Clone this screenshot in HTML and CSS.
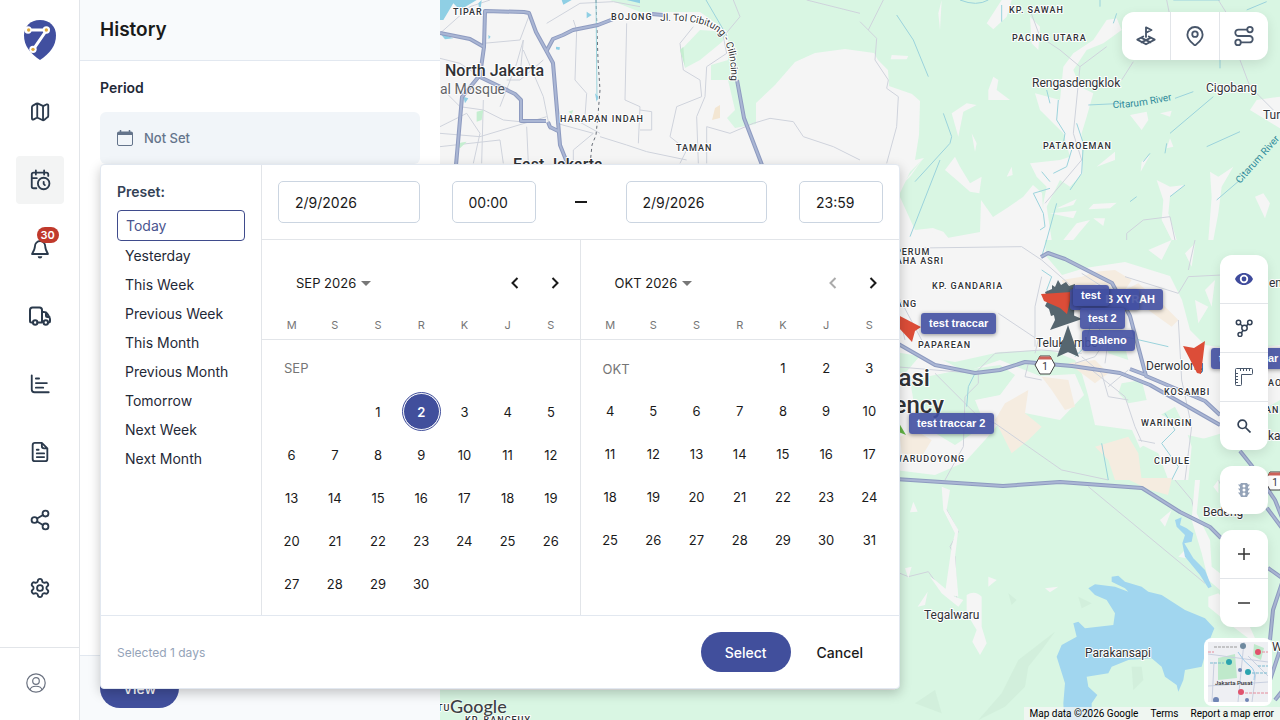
FILE: index.html
```html
<!DOCTYPE html>
<html lang="en">
<head>
<meta charset="utf-8">
<meta name="viewport" content="width=device-width, initial-scale=1">
<title>History</title>
<link rel="stylesheet" href="styles.css">
</head>
<body>
<div class="app">
  <nav class="rail" aria-label="Main">
    <a class="rail-logo" href="#" aria-label="Home">
      <svg width="32" height="40" viewBox="0 0 96 120">
        <path d="M48 0C18 0 0 20 0 46c0 32 18 54 48 74 30-20 48-42 48-74C96 20 78 0 48 0Z" fill="#414f9f"/>
        <path d="M8 30H68L28 88" fill="none" stroke="#fff" stroke-width="9"/>
        <g fill="#fff"><circle cx="12" cy="30" r="11"/><circle cx="67" cy="30" r="11"/><circle cx="27" cy="88" r="11"/></g>
        <g fill="#e0a93c"><circle cx="14" cy="30" r="5"/><circle cx="67" cy="30" r="5"/><circle cx="27" cy="88" r="5"/></g>
      </svg>
    </a>
    <a class="rail-item" href="#" aria-label="Map"><svg class="icon" viewBox="0 0 24 24"><path d="M3.2 6.6a2 2 0 0 1 1-1.6L8 2.9q1-.5 2 0l4.500 2.200q1 .5 2 0L19 3.800q2-.7 2 1.200v11.200a2 2 0 0 1-1.100 1.700L16.500 20.700q-1 .5-2 0L10 18.500q-1-.5-2 0L5.200 20q-2 .7-2-1.200ZM9 3v15M15.300 5.500V21"/></svg></a>
    <a class="rail-item active" href="#" aria-label="History"><svg class="icon" viewBox="0 0 24 24"><path d="M21 7.500V6a2 2 0 0 0-2-2H5a2 2 0 0 0-2 2v13a2 2 0 0 0 2 2h3M16.500 1.500V6M7.500 1.500V6M3 10h5.500M17.300 17.500 16 16.200V14"/><circle cx="16" cy="15.800" r="6.300"/></svg></a>
    <a class="rail-item" href="#" aria-label="Alerts"><svg class="icon" viewBox="0 0 24 24"><path d="M6.500 10a5.600 5.600 0 0 1 11.200 0c0 3 1 5 3 8.500H3.300c2-3.500 3.200-5.500 3.200-8.500Z"/><path class="solid" d="M9.500 21h5a2.500 2.500 0 0 1-5 0Z"/></svg><span class="badge">30</span></a>
    <a class="rail-item" href="#" aria-label="Vehicles"><svg class="icon truck" viewBox="0 0 24 24"><path d="M5 18.500H3.500a1.500 1.500 0 0 1-1.500-1.500V6a2.500 2.500 0 0 1 2.500-2.500h7A2.500 2.500 0 0 1 14 6v12.500H9.500M14 8h2q2.500 0 3.500 2l1.700 3q.8 1.300.8 2.500V17a1.500 1.500 0 0 1-1.500 1.500h-.500M18 8.500v3q0 1.500 1.500 1.500h2"/><circle cx="7.200" cy="18.500" r="2.200"/><circle cx="17.800" cy="18.500" r="2.200"/></svg></a>
    <a class="rail-item" href="#" aria-label="Statistics"><svg class="icon" viewBox="0 0 24 24"><path d="M3 2.500V18a3 3 0 0 0 3 3h15.500M7.500 6h3.500M7.500 11h12M7.500 16h8"/></svg></a>
    <a class="rail-item" href="#" aria-label="Reports"><svg class="icon" viewBox="0 0 24 24"><path d="M14 2H6.500A2.500 2.500 0 0 0 4 4.500v15A2.500 2.500 0 0 0 6.500 22h11a2.500 2.500 0 0 0 2.500-2.500V8ZM14 2v3.500A2.500 2.500 0 0 0 16.500 8H20M8.500 9.500h2M8.500 13.500h8M8.500 17.500h8"/></svg></a>
    <a class="rail-item" href="#" aria-label="Share"><svg class="icon" viewBox="0 0 24 24"><circle cx="18" cy="5" r="3.200"/><circle cx="6" cy="12" r="3.200"/><circle cx="18" cy="19" r="3.200"/><path d="m8.800 13.600 6.400 3.800M15.200 6.600 8.800 10.400"/></svg></a>
    <a class="rail-item" href="#" aria-label="Settings"><svg class="icon" viewBox="0 0 24 24"><path d="M9.671 4.136a2.340 2.340 0 0 1 4.659 0 2.340 2.340 0 0 0 3.319 1.915 2.340 2.340 0 0 1 2.330 4.033 2.340 2.340 0 0 0 0 3.831 2.340 2.340 0 0 1-2.330 4.033 2.340 2.340 0 0 0-3.319 1.915 2.340 2.340 0 0 1-4.659 0 2.340 2.340 0 0 0-3.320-1.915 2.340 2.340 0 0 1-2.330-4.033 2.340 2.340 0 0 0 0-3.831A2.340 2.340 0 0 1 6.350 6.051a2.340 2.340 0 0 0 3.319-1.915"/><circle cx="12" cy="12" r="3.200"/></svg></a>
    <div class="rail-user"><a href="#" aria-label="Account"><svg width="20" height="20" viewBox="0 0 20 20" fill="none" stroke="#6b7280" stroke-width="1.200"><circle cx="10" cy="10" r="9.200"/><circle cx="10" cy="8" r="3.300"/><path d="M4 17c1-5 11-5 12 0"/></svg></a></div>
  </nav>

  <section class="panel">
    <header class="panel-head"><h1>History</h1></header>
    <div class="panel-body">
      <h2 id="period">Period</h2>
      <div class="picker">
        <button class="period-field" type="button" aria-labelledby="period">
          <svg width="18" height="18" viewBox="0 0 18 18"><path d="M4.500 1v3M13.500 1v3" stroke="#64748b" stroke-width="1.500"/><path d="M3 2.500h12a2 2 0 0 1 2 2V6H1V4.500a2 2 0 0 1 2-2Z" fill="#64748b"/><rect x="1.500" y="3.500" width="15" height="13" rx="1.500" fill="none" stroke="#64748b"/></svg>
          <span>Not Set</span>
        </button>

        <div class="dialog" role="dialog" aria-label="Select period">
          <div class="dialog-main">
            <aside class="presets">
              <h3>Preset:</h3>
              <button class="preset current" type="button">Today</button>
              <button class="preset" type="button">Yesterday</button>
              <button class="preset" type="button">This Week</button>
              <button class="preset" type="button">Previous Week</button>
              <button class="preset" type="button">This Month</button>
              <button class="preset" type="button">Previous Month</button>
              <button class="preset" type="button">Tomorrow</button>
              <button class="preset" type="button">Next Week</button>
              <button class="preset" type="button">Next Month</button>
            </aside>
            <div class="range">
              <div class="inputs">
                <input class="date" type="text" value="2/9/2026" aria-label="Start date">
                <input class="time" type="text" value="00:00" aria-label="Start time">
                <span class="dash"></span>
                <input class="date" type="text" value="2/9/2026" aria-label="End date">
                <input class="time" type="text" value="23:59" aria-label="End time">
              </div>
              <div class="calendars">
                <div class="cal">
                  <div class="cal-head">
                    <button class="month" type="button">SEP 2026 <i class="caret"></i></button>
                    <button class="arrow" type="button" aria-label="Previous month"><svg width="10" height="14" viewBox="0 0 10 14"><path d="M7.500 2 2.500 7l5 5"/></svg></button>
                    <button class="arrow" type="button" aria-label="Next month"><svg width="10" height="14" viewBox="0 0 10 14"><path d="m2.500 2 5 5-5 5"/></svg></button>
                  </div>
                  <div class="weekdays"><span>M</span><span>S</span><span>S</span><span>R</span><span>K</span><span>J</span><span>S</span></div>
                  <table class="days">
                    <tr class="label-row"><td colspan="7">SEP</td></tr>
                    <tr><td></td><td></td><td>1</td><td><button class="day-on" type="button">2</button></td><td>3</td><td>4</td><td>5</td></tr>
                    <tr><td>6</td><td>7</td><td>8</td><td>9</td><td>10</td><td>11</td><td>12</td></tr>
                    <tr><td>13</td><td>14</td><td>15</td><td>16</td><td>17</td><td>18</td><td>19</td></tr>
                    <tr><td>20</td><td>21</td><td>22</td><td>23</td><td>24</td><td>25</td><td>26</td></tr>
                    <tr><td>27</td><td>28</td><td>29</td><td>30</td><td></td><td></td><td></td></tr>
                  </table>
                </div>
                <div class="cal">
                  <div class="cal-head">
                    <button class="month" type="button">OKT 2026 <i class="caret"></i></button>
                    <button class="arrow" type="button" disabled aria-label="Previous month"><svg width="10" height="14" viewBox="0 0 10 14"><path d="M7.500 2 2.500 7l5 5"/></svg></button>
                    <button class="arrow" type="button" aria-label="Next month"><svg width="10" height="14" viewBox="0 0 10 14"><path d="m2.500 2 5 5-5 5"/></svg></button>
                  </div>
                  <div class="weekdays"><span>M</span><span>S</span><span>S</span><span>R</span><span>K</span><span>J</span><span>S</span></div>
                  <table class="days">
                    <tr><td class="month-label" colspan="4">OKT</td><td>1</td><td>2</td><td>3</td></tr>
                    <tr><td>4</td><td>5</td><td>6</td><td>7</td><td>8</td><td>9</td><td>10</td></tr>
                    <tr><td>11</td><td>12</td><td>13</td><td>14</td><td>15</td><td>16</td><td>17</td></tr>
                    <tr><td>18</td><td>19</td><td>20</td><td>21</td><td>22</td><td>23</td><td>24</td></tr>
                    <tr><td>25</td><td>26</td><td>27</td><td>28</td><td>29</td><td>30</td><td>31</td></tr>
                  </table>
                </div>
              </div>
            </div>
          </div>
          <footer class="dialog-foot">
            <span class="summary">Selected 1 days</span>
            <button class="btn primary" type="button">Select</button>
            <button class="btn plain" type="button">Cancel</button>
          </footer>
        </div>
      </div>
    </div>
    <footer class="panel-foot"><button class="btn view" type="button">View</button></footer>
  </section>

  <main class="map">
    <svg class="map-art" viewBox="440 0 840 720" preserveAspectRatio="xMinYMin slice">
      <defs>
        <path id="roads" d="M484 47 485 11 524 12 529 13 536 32 547 52 553 63 557 110 560 145 568 165M546 52 553 39 563 35 573 30 598 25 616 18M440 33 470 39 484 47 480 75 462 97 456 165M480 77 515 94 521 100V121L546 121M548 122 550 127 558 131M652 14 663 15M737 80 744 118 762 165M895 342 935 365 975 373 1000 370 1025 362 1072 366 1120 373 1150 385 1220 425M1041 257 1048 253 1065 259 1112 283 1130 316 1146 376 1205 401 1220 415M1130 369 1146 375M895 479 1003 486 1060 482 1142 488 1180 512 1210 527 1221 538M1240 451 1252 466 1275 500 1283 520M1267 508 1285 532M1268 568 1285 580M1283 580 1273 610 1270 640M1280 650 1270 680M1275 700 1283 690"/>
        <path id="toll" d="M660 21Q700 19 716 31T731 81L737 112"/>
        <path id="river1" d="M1113 108Q1140 108 1180 98"/>
        <path id="river2" d="M1240 184 1288 130"/>
      </defs>
      <rect x="440" y="0" width="2400" height="1400" fill="#f5f5f5"/>
      <path fill="#d9f6e3" d="M610 0 640 12 700 12 728 32 722 42 700 60 685 68 681 50 700 30 728 32V60L711 65V80H728L735 110 727 118 735 128 756 124 756 103 775 85 795 62 815 53 845 49 874 53 878 60 888 70 889 86 912 94 920 101 919 135 915 160 924 158 910 172 899 195 915 230 933 228 947 238 980 232 981 200 993 217 1007 208 1023 197 1033 185 1042 193 1046 256 1062 275 1085 268 1125 262 1170 276 1182 300 1190 330 1205 345 1240 350 1280 345V0Z"/>
      <path fill="#d9f6e3" d="M895 352 955 362 1000 352 1050 350 1075 360 1082 374 1088 395 1095 425 1132 430 1140 448 1165 430 1210 440 1280 400V720H440V690H895Z"/>
      <path fill="#f5f5f5" d="M895 385 925 350 965 372 1000 360 1040 376 1075 374 1084 395 1060 420 1010 410 985 440 965 462 935 475 895 470Z"/>
      <path fill="#d9f6e3" d="M910 380 950 372 1000 365 1015 375 1000 395 975 400 985 425 955 445 930 430 915 410Z"/>
      <g transform="translate(895 240) scale(.33333)">
        <path fill="#f5ece0" d="M560 110 600 95 660 90 710 120 690 150 610 130 520 170 500 120ZM690 150 730 130 800 190 850 240 830 260 760 210ZM15 590 60 570 110 600 80 650 20 640ZM330 490 400 450 390 520 440 560 400 600 350 640 330 600 300 540ZM440 410 520 420 540 500 510 510 470 450ZM600 620 700 590 730 640 740 720H660L640 660ZM520 370 600 360 640 400 600 430Z"/>
        <path fill="#d9f6e3" d="M680 430 740 420 755 480 700 490 670 460ZM630 290 690 320 700 360 640 340ZM770 540 840 500 860 540 820 560ZM880 610 980 580V720H830L870 660ZM100 470 150 430 160 480ZM560 190 600 200 590 240Z"/>
        <path fill="#f5f5f5" d="M720 560 790 520 870 560 890 620 880 720H820L790 640 730 610ZM890 340 980 330V560L910 480 870 440Z"/>
      </g>
      <g class="field" transform="translate(860 0) scale(.33333)">
        <path d="M245 0 240 90 235 40ZM380 70 425 0H455L440 50 400 88ZM510 50 540 80 535 150 515 130ZM95 165 145 168 140 178 92 178ZM740 60 770 55 785 90 730 130 680 150 640 210 660 260 700 280 680 350 665 400 668 520 630 560 600 540 560 620 575 720H545L550 610 560 560 530 530 510 490 600 480 630 470 610 400 540 330 525 280 600 300 610 200 640 160 700 120ZM400 230 415 240 410 270 450 300 385 300 385 270ZM275 340 320 310 350 315 310 335 295 410ZM335 400 350 430 345 455ZM255 510 285 470 300 500 330 550 365 530 358 580 330 575 290 540ZM440 530 455 500 458 525ZM810 345 860 335 865 360 845 390ZM900 340 935 332 930 350ZM930 415 940 440 920 445ZM710 500 765 455 765 480ZM842 515 845 485 870 465ZM890 540 930 560 975 555 930 590 925 640 950 720H935L905 660 910 600ZM1050 515 1075 530 1120 500 1085 560 1075 640 1060 720H1045L1055 590ZM1185 590 1210 580 1230 610 1215 655ZM590 625 650 597 640 615 600 625ZM570 640 650 632 640 655ZM685 628 700 612 770 608 750 625ZM610 720 650 670 690 660 660 695 640 720ZM700 655 735 655 730 678ZM1190 300 1260 290V385L1170 330ZM190 475 120 560 150 530ZM220 685 250 695 270 720H215Z"/>
      </g>
      <g class="field" transform="translate(895 240) scale(.33333)"><path d="M760 30 830 0 800 60ZM870 40 900 10 890 80ZM930 150 960 120 950 200ZM690 200 740 180 720 240ZM900 180 940 200 910 250Z"/></g>
      <g class="lane" transform="translate(440 0) scale(.33333)">
        <path d="M0 100 90 20 150 0M130 130 240 120 270 40M0 175 60 190 120 230M240 230 250 120 230 190 180 320M250 150 310 290 330 390M0 260 60 320 130 330 190 360 240 365M0 400 120 410 320 350M0 380 80 340 120 400 100 490M200 240 240 240 310 180M130 300 125 490M0 440 180 420 190 490M260 380 265 490M400 60 410 90 405 240 440 280 435 350M560 70 555 300 600 320 595 430M600 330 635 335V390L600 390M760 80 720 130 730 210 780 240 785 290 710 320 690 410 740 450 720 490M880 0 900 50 850 110 860 160 800 200 795 290 770 350 775 490M320 70 420 10 520 5 600 20M480 410 560 435 620 455 740 480M800 490 800 380 870 400 940 370 990 355 1060 365 1090 410 1180 440 1260 480M390 350 480 400M1100 0 1260 40M350 370 460 400 400 450V490"/>
      </g>
      <g class="lane" transform="translate(860 0) scale(.33333)"><path d="M70 0 25 90M0 65 50 115 45 180 85 240 80 265 115 290 110 380 80 490M510 30 540 110 600 150 660 200 640 400 665 480 555 610M920 0 930 50M820 185 785 240M1075 0 1100 40M1140 180 1170 260 1240 330M800 720V700L850 660 930 650 945 720M660 200 740 140"/></g>
      <g class="lane" transform="translate(895 240) scale(.33333)"><path d="M0 25 380 20 440 60 520 130 570 190 590 240M420 320 420 200 440 110M540 370 600 350 640 290 680 320M0 150 80 300M0 170 30 300M0 380 240 400 300 340 440 330 560 340M690 110 850 160 880 110 980 105M560 100 700 190M590 390 690 470 720 560 740 605M560 350 620 400 640 470 700 480M700 390 640 440M120 400 250 530 300 550 500 690 640 720M250 390 250 430 210 470 205 620 150 720M400 370 390 410 440 420M850 240 860 420 890 560 870 720M900 0 880 90M730 600 780 610M310 220 430 300 420 340M590 240 640 300 630 370"/></g>
      <g class="lane" transform="translate(895 480) scale(.33333)"><path d="M580 20 930 310M15 280 40 290 100 275 125 310 185 355 180 230 165 200 190 155 155 90 145 30M840 0 890 60 905 120M970 0 1000 60"/></g>
      <g class="river" transform="translate(860 0) scale(.33333)"><path d="M110 45 160 120 205 230M300 0Q350 20 385 0M425 15V65M720 0V20M560 270 570 310M595 300 590 360 615 400 610 430M650 370 670 430 665 520 630 570M635 450 620 500 580 520M520 580 570 565M545 515 570 545M520 580 550 640 555 680 540 690M590 610 560 720M250 340 275 410 270 430 165 545M240 480 150 710M770 40 760 70M940 0 1080 0M1160 30 1220 5M945 295 1000 275M685 315 790 310M1060 290 930 400M1140 395 1040 440M870 460 850 485M920 430 915 460M930 590 975 555M830 590 810 605M1080 180V205M1140 540 1070 600"/></g>
      <g class="river" transform="translate(895 240) scale(.33333)"><path d="M455 0 440 50M440 90 470 110 455 150 475 170M690 290 820 320M810 520 840 570 800 610 850 680 830 720M620 610 640 720M240 400 220 440 215 500M540 350 570 320 590 240"/></g>
      <path class="dashes" d="M596 0 598 60 600 90 598 115 596 135 592 145 590 165"/>
      <path class="river thin" d="M596 0 597 100M706 0 727 36"/>
      <g fill="#8fcfe4" transform="translate(440 0) scale(.33333)"><path d="M0 0H110L60 30 40 10 10 60 0 60ZM115 10 125 0 120 45ZM365 0H395L370 14ZM440 35 455 45 440 55ZM0 100 40 115 15 118ZM560 0H600V10ZM348 140 360 142 358 150 348 148ZM465 280 475 290 470 305ZM145 105 152 110 146 118ZM70 290 85 295 75 310Z"/></g>
      <g fill="#c5eed0" transform="translate(440 0) scale(.33333)"><path d="M110 335 130 330 125 360 110 365ZM50 430 80 425 60 445ZM385 335 400 330 395 342ZM720 150 730 140 735 200Z"/></g>
      <path d="M715 108 720 105 720 118 712 120Z" fill="#f3e6d2"/>
      <g class="field" transform="translate(895 480) scale(.33333)"><path d="M140 20 165 30 155 90 190 150 180 230 190 350 150 340 170 200 180 160 145 90ZM30 265 50 260 40 295ZM215 345Q240 330 260 350V440L275 490 255 525 232 485 245 450 215 400ZM280 290 305 300 280 320ZM450 325 490 320 465 337ZM68 380 98 335 90 375ZM55 65 68 95 45 97ZM105 290 120 300 180 350 205 360 190 380 140 340ZM900 0H915L905 100 945 180 950 260 975 280V330L940 300 920 220 890 120ZM940 350 970 340 1060 430 1080 475H1060L1000 430 940 380ZM795 120 830 90 810 140ZM850 230 870 210 875 235ZM955 20 970 0V40Z"/></g>
      <g fill="#ceecd9" opacity=".7" transform="translate(895 480) scale(.33333)"><path d="M370 540 480 455 440 510 400 560 390 620 330 680 250 720 320 640ZM710 560 740 560 745 600 715 630ZM550 350 590 370 560 385ZM60 670 120 630 140 700ZM340 340 365 360 350 375Z"/></g>
      <path fill="#f5ece0" d="M1125 478H1172L1168 495 1150 490Z"/>
      <g fill="#a1d6ef" transform="translate(895 480) scale(.33333)">
        <path d="M650 290 670 287 690 305 740 320 760 335 800 345 870 390 930 415 958 445 940 490 920 560 870 570 865 600 850 635 845 615 810 590 800 560 770 535 700 540 650 560 640 580 575 590 580 620 607 645 590 670V720H508L505 670 510 610 485 530 500 495 545 470 535 430 550 425 570 445 655 435 660 400 635 360 600 345 580 325 600 313 660 320 700 335 690 325 650 305Z"/>
        <path d="M840 120 860 112 855 135 875 145 895 160 890 185 868 190 895 235 930 270 950 320 940 325 915 285 870 230 862 190 870 165 845 140Z"/>
      </g>
      <use href="#roads" class="road-edge"/>
      <use href="#roads" class="road-core"/>
      <g class="shield" id="shield"><path d="M1040 356h10l5 9-5 9h-10l-5-9Z"/><path class="cap" d="M1039.500 356.500h11l1.500 3h-14Z"/><text x="1045" y="370">1</text></g>
      <use href="#shield" x="230" y="116"/>
      <g class="caps">
        <text x="453" y="15">TIPAR</text><text x="611" y="20">BOJONG</text><text x="560" y="122">HARAPAN INDAH</text><text x="676" y="151">TAMAN</text>
        <text x="1009" y="13">KP. SAWAH</text><text x="1012" y="41">PACING UTARA</text><text x="1043" y="149">PATAROEMAN</text>
        <text x="895" y="255">PERUM</text><text x="889" y="264">RAHA ASRI</text><text x="932" y="289">KP. GANDARIA</text><text x="889" y="307">BANG</text><text x="918" y="348">PAPAREAN</text>
        <text x="1164" y="395">KOSAMBI</text><text x="1141" y="426">WARINGIN</text><text x="1154" y="464">CIPULE</text><text x="894" y="462">WARUDOYONG</text>
        <text x="1268" y="386">AO</text><text x="1265" y="413">AN</text><text x="424" y="711">BATU</text><text x="465" y="723">KP. BANCEUY</text>
      </g>
      <g class="place">
        <text x="1032" y="87">Rengasdengklok</text><text x="1206" y="92">Cigobang</text><text x="1263" y="119">Turi</text><text x="1036" y="347">Telukjambe</text><text x="1146" y="370">Derwolong</text><text x="1203" y="516">Bedeng</text><text x="924" y="619">Tegalwaru</text><text x="1085" y="657">Parakansapi</text><text x="1269" y="287">en</text><text x="1268" y="440">kar</text><text x="1272" y="651">W</text>
      </g>
      <text class="town" x="445" y="76">North Jakarta</text><text class="town" x="513" y="170">East Jakarta</text><text class="poi" x="440" y="94">al Mosque</text>
      <text class="city" x="886" y="386">kasi</text><text class="city" x="880" y="413">gency</text>
      <text class="route"><textPath href="#toll">Jl. Tol Cibitung - Cilincing</textPath></text>
      <text class="water"><textPath href="#river1">Citarum River</textPath></text>
      <text class="water"><textPath href="#river2">Citarum River</textPath></text>
      <g fill="#56666f"><path d="M1045 292 1052 289 1052 285 1055 287 1058 280 1061 285 1066 282 1069 286 1075 284 1074 318 1058 318 1054 315 1051 316 1049 309 1045 306 1048 300Z"/><path d="M1052 306 1082 319 1050 330 1055 320Z"/><path d="M1068 325 1079 357 1068 352 1057 357Z"/></g>
      <g fill="#dc4d38"><path d="M1041 294 1072 292 1067 314 1060 308 1044 301Z"/><path d="M896 314 921 327 915 331 912 342 899 328Z"/><path d="M1183 346 1194 348 1205 341 1201 374 1197 373Z"/></g>
      <path fill="#64b444" d="M896 418 906 435 896 431Z"/>
    </svg>

    <div class="pins">
      <span class="pin p1">test traccar</span><span class="pin p2">RAH</span><span class="pin p3">B XY</span><span class="pin p4">test</span><span class="pin p5">test 2</span><span class="pin p6">Baleno</span><span class="pin p7">test traccar</span><span class="pin p8">test traccar 2</span>
    </div>

    <div class="tools tools-row">
      <button type="button" aria-label="Zones"><svg class="icon slim" width="22" height="22" viewBox="0 0 24 24"><path d="M12 13V2.500l6 3-6 3M9 12.500 2.500 16l9.500 5 9.500-5-6.500-3.500M7 14l10 5M17 14 7 19"/></svg></button>
      <button type="button" aria-label="Places"><svg class="icon slim" width="22" height="22" viewBox="0 0 24 24"><path d="M20.300 10.500c0 5.500-5.300 9-7.300 11a1.500 1.500 0 0 1-2 0c-2-2-7.300-5.500-7.300-11a8.300 8.300 0 0 1 16.600 0Z"/><circle cx="12" cy="10" r="3"/></svg></button>
      <button type="button" aria-label="Routes"><svg class="icon slim" width="22" height="22" viewBox="0 0 24 24"><circle cx="18.500" cy="5" r="3"/><circle cx="5.500" cy="19" r="3"/><path d="M15.500 5H6a3.500 3.500 0 0 0 0 7h12a3.500 3.500 0 0 1 0 7H8.500"/></svg></button>
    </div>

    <div class="side">
      <div class="tools">
        <button type="button" aria-label="Visibility"><svg width="18" height="14" viewBox="0 0 18 14"><path fill="#3f4b9c" fill-rule="evenodd" d="M9 1c4 0 7.500 2.500 9 6-1.500 3.500-5 6-9 6S1.500 10.500 0 7C1.500 3.500 5 1 9 1Zm0 1.800a4.200 4.200 0 1 0 0 8.400 4.200 4.200 0 0 0 0-8.400Zm0 1.800a2.400 2.400 0 1 1 0 4.800 2.400 2.400 0 0 1 0-4.800Z"/></svg></button>
        <button type="button" aria-label="Clusters"><svg width="18" height="18" viewBox="0 0 18 18" fill="none" stroke="#334155" stroke-width="1.500"><circle cx="3.500" cy="3.500" r="2.200"/><circle cx="14.800" cy="3.500" r="2.200"/><circle cx="9.500" cy="9" r="2.700"/><circle cx="5" cy="15.500" r="2"/><path d="m5 5 2.500 2M13 5l-1.500 2M8 11.500 6.300 14"/></svg></button>
        <button type="button" aria-label="Ruler"><svg width="18" height="18" viewBox="0 0 18 18" fill="none" stroke="#475569"><path d="M1.500.500h15a1 1 0 0 1 1 1v4a1 1 0 0 1-1 1h-10v10a1 1 0 0 1-1 1h-4a1 1 0 0 1-1-1v-15a1 1 0 0 1 1-1ZM5.500 1v2M8.500 1v2M11.500 1v2M14.500 1v2M1 5.500h2M1 8.500h2M1 11.500h2M1 14.500h2"/></svg></button>
        <button type="button" aria-label="Search"><svg width="14" height="14" viewBox="0 0 14 14" fill="none" stroke="#334155" stroke-width="1.700"><circle cx="5.300" cy="5.300" r="4.200"/><path d="m8.500 8.500 5 5"/></svg></button>
      </div>
      <div class="tools">
        <button type="button" aria-label="Traffic"><svg width="12" height="14" viewBox="0 0 12 14"><path fill="#94a3b8" fill-rule="evenodd" d="M3 0h6l1 1.500h2L10 4v1.500h2L10 8v1.500h2L10 12l-1 2H3l-1-2L0 9.500h2V8L0 5.500h2V4L0 1.500h2ZM6 1.500a1.500 1.500 0 1 0 0 3 1.500 1.500 0 0 0 0-3Zm0 4a1.500 1.500 0 1 0 0 3 1.500 1.500 0 0 0 0-3Zm0 4a1.500 1.500 0 1 0 0 3 1.500 1.500 0 0 0 0-3Z"/></svg></button>
      </div>
      <div class="tools">
        <button type="button" aria-label="Zoom in"><svg width="12" height="12" viewBox="0 0 12 12"><path d="M6 0v12M0 6h12" stroke="#333" stroke-width="1.500"/></svg></button>
        <button type="button" aria-label="Zoom out"><svg width="12" height="12" viewBox="0 0 12 12"><path d="M0 6h12" stroke="#333" stroke-width="1.500"/></svg></button>
      </div>
    </div>

    <button class="minimap" type="button" aria-label="Map type">
      <svg width="60" height="60" viewBox="0 0 60 60">
        <rect width="60" height="60" fill="#eeeff3"/>
        <path d="m10 16 17-4 2 24-19 2ZM46 2l10 4-3 12-8-4Z" fill="#bfe9cb"/>
        <path d="m0 44 60-4M36 0l-6 60M6 20 4 60M0 12l60 8M40 14l20 20M44 60l4-30" fill="none" stroke="#c8cfdf"/>
        <path d="M30 10q6 10 12 14t4 14" fill="none" stroke="#9bc8e8"/>
        <g><circle cx="35" cy="4" r="3" fill="#6f8a9f"/><circle cx="50" cy="10" r="3" fill="#e0526c"/><circle cx="21" cy="20" r="3" fill="#2ca4ae"/><circle cx="40" cy="30" r="3" fill="#2ca4ae"/><circle cx="33" cy="50" r="3" fill="#e0526c"/><circle cx="32" cy="28" r="2" fill="#6f85b5"/><circle cx="8" cy="58" r="3" fill="#6f85b5"/><circle cx="39" cy="58" r="2" fill="#6f85b5"/></g>
        <g fill="none" stroke-width="1" stroke-dasharray="3 1"><path d="M6 5h24" stroke="#999"/><path d="M2 21h14M44 31h16M50 24h10" stroke="#7bbbd0"/><path d="M37 51h23M54 10h6M0 10h6" stroke="#e58c9c"/></g>
        <text x="7" y="43">Jakarta Pusat</text>
      </svg>
    </button>
    <span class="google">Google</span>
    <div class="credits"><span>Map data ©2026 Google</span><a href="#">Terms</a><a href="#">Report a map error</a></div>
  </main>
</div>
</body>
</html>
```

FILE: styles.css
```css
* { box-sizing: border-box; }
body { margin: 0; font-family: Inter, "Liberation Sans", sans-serif; font-size: 14px; color: #1f2937; }
button, input { font: inherit; color: inherit; }
button { border: 0; background: none; padding: 0; cursor: pointer; }
h1, h2, h3 { margin: 0; }
a { color: inherit; text-decoration: none; }
svg { display: block; flex: none; }

.app { display: flex; min-height: 100vh; }
.icon { fill: none; stroke: #2b3a4c; stroke-width: 2; stroke-linecap: round; stroke-linejoin: round; }
.icon .solid { fill: #2b3a4c; stroke: none; }
.slim { stroke: #475569; }

.rail { width: 80px; flex: none; display: flex; flex-direction: column; align-items: center; gap: 20px; padding-top: 16px; background: #fff; border-right: 1px solid #e2e5e9; }
.rail-logo { height: 48px; margin-bottom: 4px; display: flex; align-items: center; }
.rail-item { position: relative; width: 48px; height: 48px; display: flex; align-items: center; justify-content: center; border-radius: 4px; }
.rail-item .icon { width: 22px; height: 22px; }
.rail-item .truck { width: 24px; height: 24px; }
.rail-item.active { background: #f3f4f4; }
.badge { position: absolute; top: 3px; left: 21px; height: 16px; line-height: 16px; padding: 0 4px; border-radius: 8px; background: #c0392b; color: #fff; font-size: 11px; font-weight: 600; }
.rail-user { align-self: stretch; margin-top: auto; height: 73px; border-top: 1px solid #e2e5e9; display: flex; align-items: center; justify-content: center; padding: 0 8px 2px 0; }

.panel { width: 360px; flex: none; display: flex; flex-direction: column; background: #fff; position: relative; z-index: 2; }
.panel-head { height: 61px; display: flex; align-items: center; padding: 0 20px; background: #f8fafc; border-bottom: 1px solid #e2e8f0; }
.panel-head h1 { font-size: 19px; line-height: 24px; font-weight: 600; color: #1a1a1a; }
.panel-body { flex: 1; padding: 17px 20px; }
.panel-body h2 { font-size: 14px; line-height: 20px; font-weight: 600; margin-bottom: 14px; }
.panel-foot { border-top: 1px solid #e2e8f0; background: #f8fafc; padding: 12px 20px; }
.picker { position: relative; }
.period-field { width: 100%; height: 52px; padding: 0 16px; border-radius: 6px; background: #f1f5f9; color: #64748b; display: flex; align-items: center; gap: 10px; font-size: 13px; font-weight: 500; }

.btn { height: 40px; border-radius: 20px; font-weight: 500; }
.primary, .view { background: #414f9c; color: #fff; padding: 0 24px; }
.view { padding: 0 23px; }
.plain { padding: 0 20px; color: #1a1a1a; }

.dialog { position: absolute; top: 100%; left: 0; width: 800px; background: #fff; border: 1px solid #e2e8f0; border-radius: 4px; box-shadow: 0 4px 12px rgba(0, 0, 0, .22); }
.dialog-main { display: flex; }
.presets { width: 161px; flex: none; padding: 16px; border-right: 1px solid #e2e5e9; display: flex; flex-direction: column; }
.presets h3 { font-size: 14px; line-height: 22px; font-weight: 600; color: #334155; margin-bottom: 7px; }
.preset { height: 29px; padding: 0 8px; text-align: left; }
.preset.current { height: 31px; border: 1px solid #3f4b8c; border-radius: 4px; color: #4b558f; }
.range { flex: 1; min-width: 0; }
.inputs { display: flex; align-items: center; gap: 32px; padding: 16px; border-bottom: 1px solid #e2e5e9; }
.inputs input { height: 42px; padding: 1px 16px 0; border: 1px solid #cbd5e1; border-radius: 5px; color: #1a1a1a; min-width: 0; }
.date { flex: 1; }
.time { width: 84px; }
.dash { width: 26px; display: flex; justify-content: center; }
.dash::after { content: ""; width: 12px; height: 2px; background: #1a1a1a; }
.calendars { display: grid; grid-template-columns: 1fr 1fr; height: 375px; color: #1a1a1a; }
.cal + .cal { border-left: 1px solid #e2e5e9; margin-left: -1px; }
.cal-head { display: flex; align-items: center; padding: 22px 6px 0 34px; height: 64px; }
.month { margin-right: auto; display: flex; align-items: center; gap: 5px; font-size: 13px; }
.caret { border: 5px solid transparent; border-top-color: #777; border-bottom: 0; }
.arrow { width: 40px; height: 40px; display: flex; align-items: center; justify-content: center; }
.arrow svg { fill: none; stroke: #1a1a1a; stroke-width: 2; }
.arrow:disabled svg { stroke: #aaa; }
.weekdays { display: grid; grid-template-columns: repeat(7, 1fr); padding: 14px 8px 7px; height: 36px; line-height: 15px; text-align: center; font-size: 11px; color: #757575; border-bottom: 1px solid #e2e5e9; }
.days { table-layout: fixed; width: calc(100% - 16px); margin: 6px 8px 0; border-collapse: collapse; font-size: 13px; text-align: center; }
.days td { height: 43px; padding: 0; }
.days .label-row td { height: 44px; text-align: left; padding-left: 14px; color: #757575; }
.days .month-label { text-align: left; padding: 2px 0 0 14px; color: #757575; }
.day-on { display: block; width: 37px; height: 37px; margin: 0 auto; border-radius: 50%; background: #414f9c; color: #fff; border: 1px solid #fff; outline: 1px solid #414f9c; font-weight: 600; }
.dialog-foot { display: flex; align-items: center; gap: 6px; padding: 16px; border-top: 1px solid #e2e8f0; }
.summary { margin-right: auto; font-size: 12px; color: #94a3b8; }

.map { position: relative; flex: 1; overflow: hidden; z-index: 1; font-family: Roboto, sans-serif; background: #f5f5f5; }
.map-art { position: absolute; inset: 0; width: 100%; height: 100%; font-family: Roboto, sans-serif; }
.map-art text { paint-order: stroke; stroke: #fff; stroke-width: 2px; stroke-linejoin: round; fill: #303236; }
.map-art .field { fill: #f5f5f5; }
.map-art .lane { fill: none; stroke: #cfd3dc; stroke-width: 3; }
.map-art .river { fill: none; stroke: #9bd3dc; stroke-width: 3; }
.map-art .thin { stroke-width: 1; }
.map-art .dashes { fill: none; stroke: #666c75; stroke-width: 1; stroke-dasharray: 3 3; }
.road-edge { fill: none; stroke: #8e9bc0; stroke-width: 4; stroke-linejoin: round; }
.road-core { fill: none; stroke: #aab6d4; stroke-width: 2; stroke-linejoin: round; }
.shield path { fill: #fff; stroke: #444; }
.shield .cap { fill: #cc6259; stroke: none; }
.shield text { font-size: 10px; text-anchor: middle; }
.caps { font-size: 9px; font-weight: 500; letter-spacing: 1px; }
.place { font-size: 12px; }
.town { font-size: 16px; font-weight: 500; }
.poi { font-size: 14px; opacity: .75; }
.city { font-size: 24px; font-weight: 500; }
.route { font-size: 10px; }
.map-art .water { font-size: 10px; fill: #318c9c; stroke: none; }

.pin { position: absolute; height: 21px; padding: 0 8px; border-radius: 3px; background: rgba(67, 80, 162, .9); color: #fff; font: 700 11px/21px "Liberation Sans", Arial, sans-serif; box-shadow: 0 1px 4px rgba(0, 0, 0, .4); white-space: nowrap; }
.p1 { left: 481px; top: 313px; }
.p2 { left: 632px; top: 289px; width: 91px; text-align: right; }
.p3 { left: 630px; top: 289px; width: 69px; text-align: right; }
.p4 { left: 633px; top: 285px; }
.p5 { left: 640px; top: 308px; }
.p6 { left: 642px; top: 330px; }
.p7 { left: 771px; top: 348px; }
.p8 { left: 469px; top: 413px; }

.tools { display: flex; flex-direction: column; background: #fff; border-radius: 12px; box-shadow: 0 4px 12px rgba(0, 0, 0, .1); }
.tools button { width: 48px; height: 48px; display: flex; align-items: center; justify-content: center; }
.tools button + button { height: 49px; border-top: 1px solid #e2e5e9; }
.tools-row { position: absolute; top: 12px; right: 12px; flex-direction: row; }
.tools-row button + button { width: 49px; height: 48px; border-top: 0; border-left: 1px solid #e2e5e9; }
.side { position: absolute; top: 255px; right: 12px; display: flex; flex-direction: column; gap: 16px; }
.minimap { position: absolute; right: 8px; bottom: 14px; padding: 4px; background: #fff; border-radius: 8px; overflow: hidden; }
.minimap text { font: 500 6px Roboto, sans-serif; fill: #333; }
.google { position: absolute; left: 10px; bottom: 4px; font: 500 18px/20px Lato, sans-serif; color: #3c4043; text-shadow: 0 0 2px #fff, 0 0 2px #fff; }
.credits { position: absolute; right: 0; bottom: 0; display: flex; font-size: 10px; line-height: 13px; color: #000; }
.credits > * { padding: 0 6px; background: rgba(245, 245, 245, .75); }
```
